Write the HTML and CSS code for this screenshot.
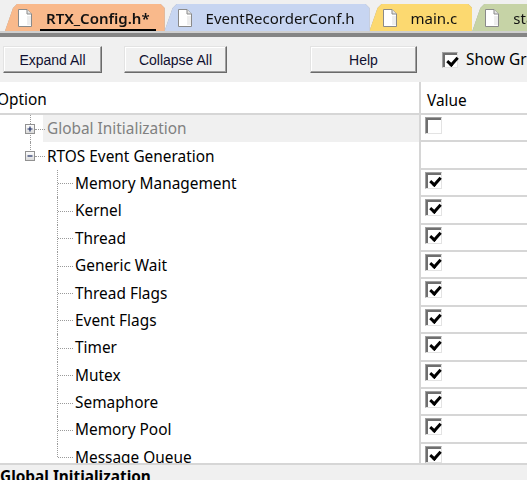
FILE: index.html
```html
<!DOCTYPE html>
<html>
<head>
<meta charset="utf-8">
<link rel="stylesheet" href="styles.css">
</head>
<body>
<div class="tabs">
  <div class="tabwrap"><div class="tab t-orange"><svg class="doc" width="14" height="18" viewBox="0 0 14 18"><path d="M0.5 0.5H9L13.5 5V17.5H0.5Z" fill="#fff" stroke="#8a8a8a"/><path d="M9 0.5V5H13.5" fill="#e6e6e6" stroke="#8a8a8a"/><path d="M10 7V16M12 7V16" stroke="#dedede"/></svg><span class="tlabel active">RTX_Config.h*</span></div></div>
  <div class="tabwrap"><div class="tab t-blue"><svg class="doc" width="14" height="18" viewBox="0 0 14 18"><path d="M0.5 0.5H9L13.5 5V17.5H0.5Z" fill="#fff" stroke="#8a8a8a"/><path d="M9 0.5V5H13.5" fill="#e6e6e6" stroke="#8a8a8a"/><path d="M10 7V16M12 7V16" stroke="#dedede"/></svg><span class="tlabel">EventRecorderConf.h</span></div></div>
  <div class="tabwrap"><div class="tab t-yellow"><svg class="doc" width="14" height="18" viewBox="0 0 14 18"><path d="M0.5 0.5H9L13.5 5V17.5H0.5Z" fill="#fff" stroke="#8a8a8a"/><path d="M9 0.5V5H13.5" fill="#e6e6e6" stroke="#8a8a8a"/><path d="M10 7V16M12 7V16" stroke="#dedede"/></svg><span class="tlabel">main.c</span></div></div>
  <div class="tabwrap"><div class="tab t-green"><svg class="doc" width="14" height="18" viewBox="0 0 14 18"><path d="M0.5 0.5H9L13.5 5V17.5H0.5Z" fill="#fff" stroke="#8a8a8a"/><path d="M9 0.5V5H13.5" fill="#e6e6e6" stroke="#8a8a8a"/><path d="M10 7V16M12 7V16" stroke="#dedede"/></svg><span class="tlabel">startup.s</span></div></div>
</div>
<div class="tabline"></div>
<div class="toolbar">
  <button class="btn b-expand">Expand All</button>
  <button class="btn b-collapse">Collapse All</button>
  <button class="btn b-help">Help</button>
  <span class="cb small checked"></span>
  <span class="showgrid">Show Grid</span>
</div>
<div class="grid">
  <div class="head"><div class="c1"><span class="htext">Option</span></div><div class="c2">Value</div></div>
  <div class="row">
    <div class="c1"><span class="lead0"></span><span class="exp first"><svg class="box" width="10" height="10" viewBox="0 0 10 10"><defs><linearGradient id="bg" x1="0" y1="0" x2="0" y2="1"><stop offset="0" stop-color="#ffffff"/><stop offset="1" stop-color="#d8d8d8"/></linearGradient></defs><rect x="0.5" y="0.5" width="9" height="9" fill="url(#bg)" stroke="#919191"/><path d="M2.5 5H7.5M5 2.5V7.5" stroke="#1e2f66" stroke-width="1.2"/></svg></span><span class="label grey">Global Initialization</span></div>
    <div class="c2"><span class="cb"></span></div>
  </div>
  <div class="row">
    <div class="c1"><span class="lead0"></span><span class="exp last"><svg class="box" width="10" height="10" viewBox="0 0 10 10"><rect x="0.5" y="0.5" width="9" height="9" fill="url(#bg)" stroke="#919191"/><path d="M2.5 5H7.5" stroke="#1e2f66" stroke-width="1.2"/></svg></span><span class="label">RTOS Event Generation</span></div>
    <div class="c2"></div>
  </div>
  <div class="row"><div class="c1"><span class="lead1"></span><span class="br"></span><span class="label">Memory Management</span></div><div class="c2"><span class="cb checked"></span></div></div>
  <div class="row"><div class="c1"><span class="lead1"></span><span class="br"></span><span class="label">Kernel</span></div><div class="c2"><span class="cb checked"></span></div></div>
  <div class="row"><div class="c1"><span class="lead1"></span><span class="br"></span><span class="label">Thread</span></div><div class="c2"><span class="cb checked"></span></div></div>
  <div class="row"><div class="c1"><span class="lead1"></span><span class="br"></span><span class="label">Generic Wait</span></div><div class="c2"><span class="cb checked"></span></div></div>
  <div class="row"><div class="c1"><span class="lead1"></span><span class="br"></span><span class="label">Thread Flags</span></div><div class="c2"><span class="cb checked"></span></div></div>
  <div class="row"><div class="c1"><span class="lead1"></span><span class="br"></span><span class="label">Event Flags</span></div><div class="c2"><span class="cb checked"></span></div></div>
  <div class="row"><div class="c1"><span class="lead1"></span><span class="br"></span><span class="label">Timer</span></div><div class="c2"><span class="cb checked"></span></div></div>
  <div class="row"><div class="c1"><span class="lead1"></span><span class="br"></span><span class="label">Mutex</span></div><div class="c2"><span class="cb checked"></span></div></div>
  <div class="row"><div class="c1"><span class="lead1"></span><span class="br"></span><span class="label">Semaphore</span></div><div class="c2"><span class="cb checked"></span></div></div>
  <div class="row"><div class="c1"><span class="lead1"></span><span class="br"></span><span class="label">Memory Pool</span></div><div class="c2"><span class="cb checked"></span></div></div>
  <div class="row"><div class="c1"><span class="lead1"></span><span class="br lastbr"></span><span class="label">Message Queue</span></div><div class="c2"><span class="cb checked"></span></div></div>
</div>
<div class="desc">Global Initialization</div>
</body>
</html>
```
FILE: styles.css
```css
* { box-sizing: border-box; }
body {
  margin: 0;
  width: 527px;
  height: 480px;
  overflow: hidden;
  background: #f0f0f0;
  font-family: "Noto Sans", "Open Sans", sans-serif;
  font-size: 15.4px;
  color: #000;
}
.tabs {
  height: 31px;
  display: flex;
  align-items: flex-end;
  padding-left: 5px;
  overflow: hidden;
  white-space: nowrap;
}
.tabwrap { flex: none; filter: drop-shadow(0 0 0.7px #a0a0a0); }
.tab {
  height: 27px;
  display: flex;
  align-items: center;
  gap: 14px;
  padding: 0 15px 0 13px;
  clip-path: polygon(0 100%, 8px 4px, 12px 0, calc(100% - 4px) 0, 100% 4px, 100% 100%);
  font-size: 15px;
  color: #111;
}
.doc { flex: none; }
.t-orange { background: #f9b98b; }
.t-blue { background: #c7d5f1; }
.t-yellow { background: #fcd970; }
.t-green { background: #c6d3a6; }
.tlabel { line-height: 20px; }
.tlabel.active {
  font-weight: 600;
  border-bottom: 2px solid #000;
  margin: 0 -6px;
  padding: 0 6px;
  line-height: 21px;
  position: relative;
  top: 2px;
}
.tabline {
  height: 6px;
  border-top: 2px solid #cfcfcf;
  border-bottom: 4px solid #858585;
}
.toolbar {
  height: 45px;
  display: flex;
  align-items: flex-start;
  padding: 9px 0 0 3px;
  white-space: nowrap;
  overflow: hidden;
}
.btn {
  height: 27px;
  font-family: "Liberation Sans", Arial, sans-serif;
  font-size: 14px;
  color: #101030;
  background: #f0f0f0;
  border: 1px solid;
  border-color: #e3e3e3 #6a6a6a #6a6a6a #e3e3e3;
  box-shadow: inset -1px -1px #a0a0a0, inset 1px 1px #fff;
  padding: 0;
  flex: none;
}
.b-expand { width: 99px; }
.b-collapse { width: 103px; margin-left: 22px; }
.b-help { width: 107px; margin-left: 83px; }
.toolbar .cb { margin: 6px 0 0 25px; flex: none; }
.showgrid { margin: 3px 0 0 8px; flex: none; }

.grid { background: #fff; height: 381px; overflow: hidden; }
.head { display: flex; height: 33px; border-bottom: 2px solid #d6d6d6; }
.c1 { width: 419px; flex: none; display: flex; align-items: center; }
.c2 { flex: 1; border-left: 2px solid #d6d6d6; }
.head .c1 { padding-top: 3px; }
.head .c2 { padding: 8px 0 0 6px; }
.htext { margin-left: -3px; }
.row { display: flex; height: 27.4px; }
.row .c2 { border-bottom: 2px solid #d6d6d6; padding: 2px 0 0 4px; }
.row .c1 { align-items: stretch; }
.lead0 { width: 20px; flex: none; }
.lead1 { width: 45px; flex: none; }
.exp, .br { position: relative; flex: none; }
.exp { width: 25px; display: flex; align-items: center; }
.br { width: 28px; }
.exp::before, .br::before {
  content: "";
  position: absolute;
  border-left: 1px dotted #9a9a9a;
}
.exp::after, .br::after {
  content: "";
  position: absolute;
  top: 50%;
  border-top: 1px dotted #9a9a9a;
}
.exp::before { left: 10px; top: 0; bottom: 0; }
.exp.last::before { bottom: 50%; }
.exp::after { left: 15px; right: 0; }
.br::before { left: 12px; top: 0; bottom: 0; }
.br.lastbr::before { bottom: 50%; }
.br::after { left: 13px; right: 0; }
.box {
  position: relative;
  z-index: 1;
  margin-left: 5px;
  display: block;
  flex: none;
}
.label {
  flex: 1;
  display: flex;
  align-items: center;
  padding-left: 2px;
  white-space: nowrap;
}
.label.grey { color: #808080; background: #f0f0f0; margin-left: -2px; padding-left: 4px; }

.cb {
  display: block;
  width: 17px;
  height: 17px;
  background: #fff;
  border: 1px solid;
  border-color: #a0a0a0 #e3e3e3 #e3e3e3 #a0a0a0;
  box-shadow: inset 2px 2px #6f6f6f;
  position: relative;
}
.cb.small { width: 16px; height: 16px; }
.cb.checked::after {
  content: "";
  position: absolute;
  left: 4px;
  top: 3px;
  width: 8px;
  height: 4px;
  border-left: 3px solid #000;
  border-bottom: 3px solid #000;
  transform: translate(0, 1px) rotate(-48deg);
}
.desc {
  height: 18px;
  border-top: 2px solid #d6d6d6;
  font-weight: bold;
  padding: 2px 0 0 0;
  white-space: nowrap;
  line-height: 20px;
}
```
